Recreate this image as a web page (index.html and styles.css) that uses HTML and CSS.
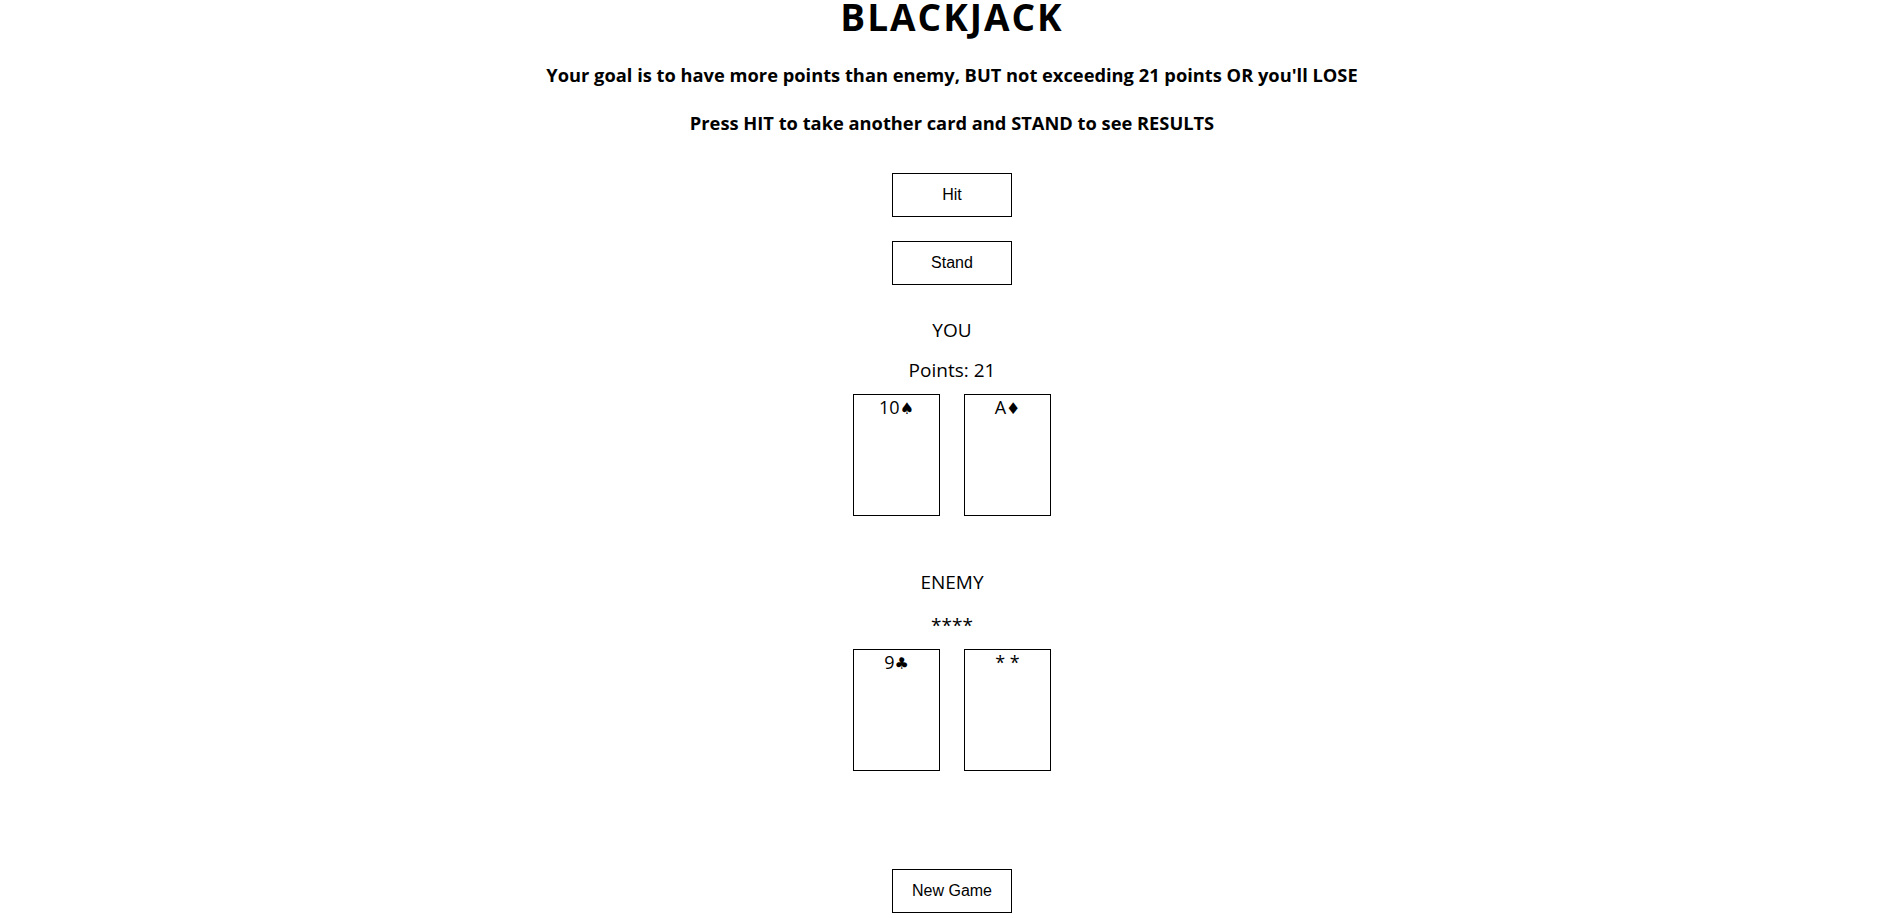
FILE: index.html
```html
<!DOCTYPE html>
<html lang="en">
<head>
<meta charset="utf-8">
<title>Blackjack</title>
<link rel="stylesheet" href="styles.css">
</head>
<body>
<main class="game">
  <h1 class="title">BLACKJACK</h1>
  <p class="rule rule-first">Your goal is to have more points than enemy, BUT not exceeding 21 points OR you'll LOSE</p>
  <p class="rule rule-second">Press HIT to take another card and STAND to see RESULTS</p>
  <button class="btn btn-hit">Hit</button>
  <button class="btn btn-stand">Stand</button>

  <section class="player player-you">
    <div class="label">YOU</div>
    <div class="points">Points: 21</div>
    <div class="hand">
      <div class="card">10<span class="suit">♠</span></div>
      <div class="card">A<span class="suit">♦</span></div>
    </div>
  </section>

  <section class="player player-enemy">
    <div class="label">ENEMY</div>
    <div class="points points-hidden">****</div>
    <div class="hand">
      <div class="card">9<span class="suit">♣</span></div>
      <div class="card">* *</div>
    </div>
  </section>

  <button class="btn btn-new">New Game</button>
</main>
</body>
</html>
```

FILE: styles.css
```css
html, body {
  margin: 0;
  padding: 0;
  background: #ffffff;
  color: #000000;
}

body {
  font-family: "Open Sans", "Noto Sans", sans-serif;
}

.game {
  display: flex;
  flex-direction: column;
  align-items: center;
  padding-left: 14px;
}

.title {
  margin: 0;
  font-size: 37px;
  line-height: 34px;
  letter-spacing: 2px;
  font-weight: 700;
}

.rule {
  margin: 0;
  font-size: 18.3px;
  line-height: 24px;
  font-weight: 700;
}

.rule-first {
  margin-top: 29px;
}

.rule-second {
  margin-top: 24px;
}

.btn {
  box-sizing: border-box;
  width: 120px;
  height: 44px;
  background: #ffffff;
  border: 1px solid #000000;
  border-radius: 0;
  font-family: "Liberation Sans", Arial, sans-serif;
  font-size: 16px;
  color: #000000;
  padding: 0;
}

.btn-hit {
  margin-top: 38px;
}

.btn-stand {
  margin-top: 24px;
}

.btn-new {
  margin-top: 98px;
}

.player {
  display: flex;
  flex-direction: column;
  align-items: center;
}

.player-you {
  margin-top: 33px;
}

.player-enemy {
  margin-top: 54px;
}

.label,
.points {
  font-size: 19px;
  line-height: 24px;
}

.points {
  margin-top: 16px;
}

.points-hidden {
  margin-top: 19px;
}

.hand {
  display: flex;
  gap: 24px;
  margin-top: 12px;
}

.card {
  box-sizing: border-box;
  width: 87px;
  height: 122px;
  border: 1px solid #000000;
  text-align: center;
  font-size: 18px;
  line-height: 24px;
}

.suit {
  font-family: "DejaVu Sans", sans-serif;
  font-size: 16px;
}
```
